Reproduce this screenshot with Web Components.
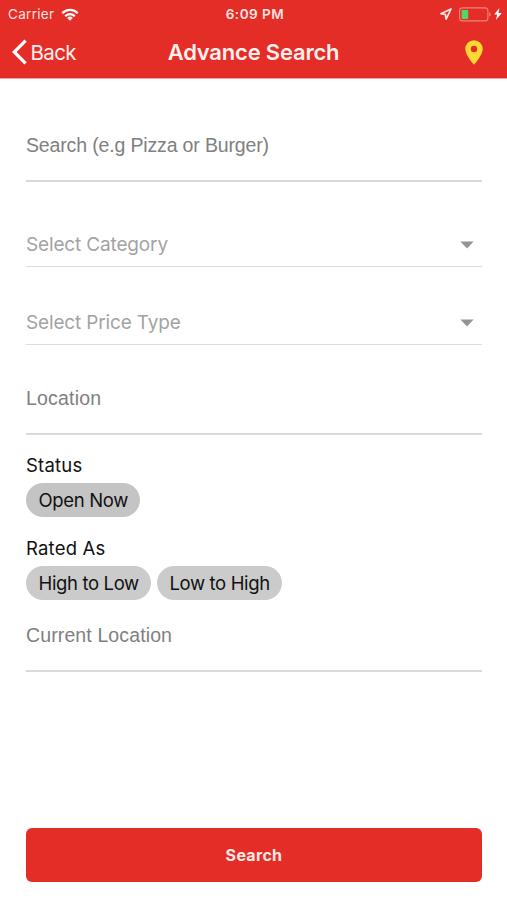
<!DOCTYPE html>
<html lang="en">
<head>
<meta charset="utf-8">
<title>Advance Search</title>
<style>
	body {
		margin: 0;
		background: #fff;
		font-family: Inter, "Liberation Sans", sans-serif;
	}
</style>
</head>
<body>
<search-screen></search-screen>

<script>
class StatusBar extends HTMLElement {
	constructor() {
		super();

		const shadow = this.attachShadow({ mode: "open" });

		shadow.innerHTML = `
			<style>
				:host {
					display: grid;
					grid-template-columns: 1fr auto 1fr;
					align-items: center;
					height: 27px;
					padding: 0 5px 0 8px;
					color: #ffe4e0;
					font-size: 13.5px;
					line-height: 28px;
				}

				.side {
					display: flex;
					align-items: center;
				}

				.right {
					justify-content: flex-end;
				}

				.carrier {
					letter-spacing: 0.3px;
				}

				.wifi {
					margin-left: 7px;
				}

				.time {
					font-weight: 600;
					letter-spacing: 0.5px;
				}

				.battery {
					margin: 0 2px 0 7px;
				}
			</style>

			<div class="side">
				<span class="carrier"><slot name="carrier"></slot></span>
				<svg class="wifi" width="18" height="13" viewBox="0 0 18 13" fill="none" stroke="#fff" stroke-width="2.2">
					<path d="M1.3 5.2a10.8 10.8 0 0 1 15.4 0"/>
					<path d="M4.2 8.2a6.8 6.8 0 0 1 9.6 0"/>
					<path d="M9 12.7 6.2 9.9a4 4 0 0 1 5.6 0z" fill="#fff" stroke="none"/>
				</svg>
			</div>
			<span class="time"><slot name="time"></slot></span>
			<div class="side right">
				<svg width="12" height="12" viewBox="0 0 12 12" fill="none" stroke="#ffe9e6" stroke-width="1.7" stroke-linejoin="round">
					<path d="M11 1 .9 5.7l4.5.8.7 4.6z"/>
				</svg>
				<svg class="battery" width="33" height="15" viewBox="0 0 33 15">
					<rect x=".6" y=".9" width="28.3" height="13" rx="3" fill="none" stroke="#f2827c" stroke-width="1.1"/>
					<rect x="2.6" y="2.9" width="6.6" height="9" rx="1" fill="#4cd964"/>
					<path d="M30.2 5.2c2 .7 2 3.7 0 4.4z" fill="#f2827c"/>
				</svg>
				<svg width="8" height="12" viewBox="0 0 8 12" fill="#fff">
					<path d="M5.4 0 .2 6.6h3L1.9 12l5.9-7H4.5z"/>
				</svg>
			</div>
		`;
	}
}

class NavBar extends HTMLElement {
	constructor() {
		super();

		const shadow = this.attachShadow({ mode: "open" });

		shadow.innerHTML = `
			<style>
				:host {
					display: grid;
					grid-template-columns: 1fr auto 1fr;
					align-items: center;
					height: 51px;
					padding: 0 24px 1px 12px;
					box-sizing: border-box;
					color: #fff0ee;
				}

				.back {
					display: flex;
					align-items: center;
					font-size: 20.5px;
					letter-spacing: -0.6px;
				}

				.back svg {
					margin-right: 3.5px;
				}

				.title {
					font-size: 22px;
					font-weight: 600;
					letter-spacing: -0.2px;
					padding-left: 12px;
				}

				.pin {
					justify-self: end;
				}
			</style>

			<div class="back">
				<svg width="15" height="26" viewBox="0 0 15 26" fill="none" stroke="#fff" stroke-width="3.2">
					<path d="M13.6 1.6 2.2 13l11.4 11.4"/>
				</svg>
				<slot name="back"></slot>
			</div>
			<div class="title"><slot></slot></div>
			<svg class="pin" width="18" height="25" viewBox="0 0 18 25">
				<path fill="#fdd835" fill-rule="evenodd" d="M9 .3A8.7 8.7 0 0 0 .3 9C.3 15.4 9 24.7 9 24.7S17.7 15.4 17.7 9A8.7 8.7 0 0 0 9 .3zm0 5.5a3.2 3.2 0 1 1 0 6.4 3.2 3.2 0 0 1 0-6.4z"/>
			</svg>
		`;
	}
}

class TextField extends HTMLElement {
	constructor() {
		super();

		const shadow = this.attachShadow({ mode: "open" });

		shadow.innerHTML = `
			<style>
				:host {
					display: block;
					padding-bottom: 23px;
					border-bottom: 2px solid #d9d9d9;
					color: #808080;
					font-family: "Liberation Sans", Arial, sans-serif;
					font-size: 19.5px;
					line-height: 24px;
				}
			</style>

			<slot></slot>
		`;
	}
}

class SelectField extends HTMLElement {
	constructor() {
		super();

		const shadow = this.attachShadow({ mode: "open" });

		shadow.innerHTML = `
			<style>
				:host {
					display: flex;
					align-items: center;
					justify-content: space-between;
					padding: 0 8px 9px 0;
					border-bottom: 1px solid #dedede;
					color: #a3a3a3;
					font-size: 19px;
					letter-spacing: -0.15px;
					line-height: 24px;
				}
			</style>

			<span><slot></slot></span>
			<svg width="14" height="8" viewBox="0 0 14 8">
				<path d="M.4.6h13.2L7 7.4z" fill="#949494"/>
			</svg>
		`;
	}
}

class ChipGroup extends HTMLElement {
	constructor() {
		super();

		const shadow = this.attachShadow({ mode: "open" });

		shadow.innerHTML = `
			<style>
				:host {
					display: block;
					color: #111;
					font-size: 18.5px;
					line-height: 24px;
				}

				.label {
					letter-spacing: 0.2px;
				}

				.chips {
					display: flex;
					gap: 6px;
					margin-top: 6px;
				}
			</style>

			<div class="label"><slot name="label"></slot></div>
			<div class="chips"><slot></slot></div>
		`;
	}
}

class FilterChip extends HTMLElement {
	constructor() {
		super();

		const shadow = this.attachShadow({ mode: "open" });

		shadow.innerHTML = `
			<style>
				:host {
					display: block;
					padding: 0 12px 0 12.5px;
					border-radius: 17px;
					background: var(--chip-color, #cbcbcb);
					letter-spacing: -0.35px;
					line-height: 34px;
				}
			</style>

			<slot></slot>
		`;
	}
}

class PrimaryButton extends HTMLElement {
	constructor() {
		super();

		const shadow = this.attachShadow({ mode: "open" });

		shadow.innerHTML = `
			<style>
				:host {
					display: block;
				}

				button {
					display: block;
					width: 100%;
					height: 54px;
					border: 0;
					border-radius: 6px;
					background: #e42d27;
					color: #ffe9e6;
					font: 700 16px Inter, "Liberation Sans", sans-serif;
					letter-spacing: 0.3px;
				}
			</style>

			<button type="button"><slot></slot></button>
		`;
	}
}

class SearchScreen extends HTMLElement {
	constructor() {
		super();

		const shadow = this.attachShadow({ mode: "open" });

		shadow.innerHTML = `
			<style>
				:host {
					display: block;
					height: 900px;
					overflow: hidden;
				}

				header {
					background: #e42d27;
					border-bottom: 1px solid #f2a09c;
				}

				main {
					display: flex;
					flex-direction: column;
					padding: 54px 25px 0 26px;
				}

				.keyword {
					letter-spacing: -0.15px;
				}

				.category {
					margin-top: 51px;
				}

				.price {
					margin-top: 44px;
				}

				.location {
					margin-top: 41px;
					letter-spacing: 0.2px;
				}

				.status {
					--chip-color: #c4c4c4;
					margin-top: 18px;
				}

				.rated {
					margin-top: 19px;
				}

				.current {
					margin-top: 23px;
					letter-spacing: 0.12px;
				}

				primary-button {
					margin-top: 156px;
				}
			</style>

			<header>
				<status-bar>
					<span slot="carrier">Carrier</span>
					<span slot="time">6:09 PM</span>
				</status-bar>
				<nav-bar><span slot="back">Back</span>Advance Search</nav-bar>
			</header>
			<main>
				<text-field class="keyword">Search (e.g Pizza or Burger)</text-field>
				<select-field class="category">Select Category</select-field>
				<select-field class="price">Select Price Type</select-field>
				<text-field class="location">Location</text-field>
				<chip-group class="status">
					<span slot="label">Status</span>
					<filter-chip>Open Now</filter-chip>
				</chip-group>
				<chip-group class="rated">
					<span slot="label">Rated As</span>
					<filter-chip>High to Low</filter-chip>
					<filter-chip>Low to High</filter-chip>
				</chip-group>
				<text-field class="current">Current Location</text-field>
				<primary-button>Search</primary-button>
			</main>
		`;
	}
}

customElements.define("status-bar", StatusBar);
customElements.define("nav-bar", NavBar);
customElements.define("text-field", TextField);
customElements.define("select-field", SelectField);
customElements.define("chip-group", ChipGroup);
customElements.define("filter-chip", FilterChip);
customElements.define("primary-button", PrimaryButton);
customElements.define("search-screen", SearchScreen);
</script>
</body>
</html>
